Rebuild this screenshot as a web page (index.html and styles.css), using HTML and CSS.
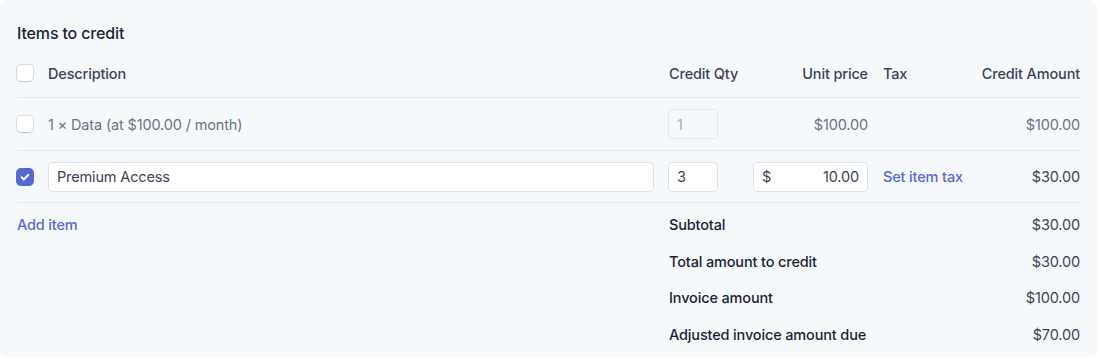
FILE: index.html
```html
<!DOCTYPE html>
<html lang="en">
<head>
<meta charset="utf-8">
<link rel="stylesheet" href="styles.css">
</head>
<body>
<div class="card">
  <h2 class="title">Items to credit</h2>
  <div class="table">
    <div class="row head">
      <span class="cb"></span>
      <span>Description</span>
      <span>Credit Qty</span>
      <span class="r">Unit price</span>
      <span>Tax</span>
      <span class="r">Credit Amount</span>
    </div>
    <div class="row item muted">
      <span class="cb"></span>
      <span>1 × Data (at $100.00 / month)</span>
      <span class="input qty disabled">1</span>
      <span class="r">$100.00</span>
      <span></span>
      <span class="r">$100.00</span>
    </div>
    <div class="row item">
      <span class="cb checked"><svg viewBox="0 0 16 16" width="16" height="16"><path d="M4.6 8.3l2.2 2.2 4.6-4.8" fill="none" stroke="#fff" stroke-width="2" stroke-linecap="round" stroke-linejoin="round"/></svg></span>
      <span class="input">Premium Access</span>
      <span class="input qty">3</span>
      <span class="input price"><span>$</span><span>10.00</span></span>
      <a class="link">Set item tax</a>
      <span class="r dark">$30.00</span>
    </div>
  </div>
  <div class="bottom">
    <a class="link add">Add item</a>
    <div class="summary">
      <div class="sum-row"><span>Subtotal</span><span class="val">$30.00</span></div>
      <div class="sum-row"><span>Total amount to credit</span><span class="val">$30.00</span></div>
      <div class="sum-row"><span>Invoice amount</span><span class="val">$100.00</span></div>
      <div class="sum-row"><span>Adjusted invoice amount due</span><span class="val">$70.00</span></div>
    </div>
  </div>
</div>
</body>
</html>
```
FILE: styles.css
```css
* { box-sizing: border-box; }
html, body { margin: 0; padding: 0; background: #ffffff; }
body {
  font-family: Inter, "Noto Sans", "Liberation Sans", sans-serif;
  font-size: 14.5px;
  letter-spacing: -0.15px;
  color: #3c4257;
}
.card {
  width: 1097px;
  height: 357px;
  background: #f6f9fc;
  border-radius: 7px;
  padding: 22px 17px 0 17px;
}
.title {
  margin: 0;
  font-size: 16px;
  font-weight: 500;
  color: #1a1f36;
  line-height: 22px;
}
.row {
  display: grid;
  grid-template-columns: 16px 1fr 70px 114px 82px 100px;
  column-gap: 15px;
  align-items: center;
  border-bottom: 1px solid #e3e8ee;
  white-space: nowrap;
}
.row.head {
  margin-top: 8px;
  height: 46px;
  padding-bottom: 3px;
  color: #3c4257;
  font-weight: 500;
}
.row.item { height: 53px; }
.row.item:last-child { height: 52px; }
.muted { color: #697386; }
.r { text-align: right; }
.dark { color: #3c4257; }
.cb {
  width: 16px;
  height: 16px;
  border-radius: 4px;
  background: #fff;
  box-shadow: 0 0 0 1px rgba(60,66,87,0.16), 0 1px 1px rgba(0,0,0,0.12);
  display: block;
}
.cb.checked {
  background: #5469d4;
  box-shadow: 0 0 0 1px #5469d4, 0 1px 1px rgba(0,0,0,0.12);
}
.cb svg { display: block; }
.input {
  display: flex;
  align-items: center;
  height: 30px;
  padding: 0 8px;
  background: #fff;
  border: 1px solid #dde2e8;
  border-radius: 4px;
  color: #3c4257;
  white-space: nowrap;
}
.input.qty { width: 50px; margin-left: -1px; }
.input.disabled {
  background: transparent;
  color: #a3acb9;
  border-color: #e3e8ee;
}
.input.price { justify-content: space-between; margin-left: -1px; }
.link {
  color: #5469d4;
  font-weight: 500;
  cursor: pointer;
  white-space: nowrap;
}
.bottom {
  display: flex;
  justify-content: space-between;
  padding-top: 12px;
}
.add { line-height: 20px; }
.summary {
  width: 411px;
  display: flex;
  flex-direction: column;
  gap: 16.5px;
}
.sum-row {
  display: flex;
  justify-content: space-between;
  line-height: 20px;
  color: #1a1f36;
  font-weight: 500;
}
.sum-row .val { color: #3c4257; font-weight: 400; }
```
